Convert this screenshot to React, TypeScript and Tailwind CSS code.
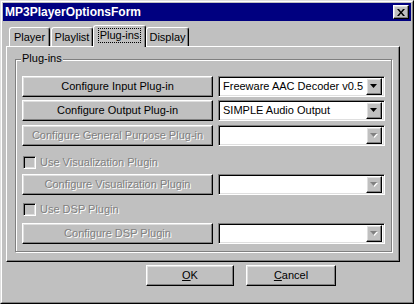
import React from 'react';

const raised =
  'border border-t-white border-l-white border-r-black border-b-black shadow-[inset_-1px_-1px_0_#808080,inset_1px_1px_0_#dfdfdf]';
const sunken =
  'border border-t-[#808080] border-l-[#808080] border-r-white border-b-white shadow-[inset_1px_1px_0_#000,inset_-1px_-1px_0_#dfdfdf]';
const dimText = 'text-[#808080] [text-shadow:1px_1px_0_#ffffff]';

function Arrow({ disabled }: { disabled?: boolean }) {
  return (
    <div className={`w-[16px] h-[17px] bg-[#c0c0c0] flex items-center justify-center ${raised}`}>
      <svg width="8" height="5" viewBox="0 0 8 5">
        {disabled && <path d="M1 1h7L4.5 5z" fill="#ffffff" />}
        <path d="M0 0h7L3.5 4z" fill={disabled ? '#808080' : '#000000'} />
      </svg>
    </div>
  );
}

function Combo({ value, disabled }: { value?: string; disabled?: boolean }) {
  return (
    <div className={`w-[167px] h-[21px] bg-white flex items-center justify-between p-[2px] ${sunken}`}>
      <span className="pl-[2px] text-[11px] text-black leading-none whitespace-nowrap">{value}</span>
      <Arrow disabled={disabled} />
    </div>
  );
}

function PushButton({ label, disabled, width = 'w-[191px]' }: { label: React.ReactNode; disabled?: boolean; width?: string }) {
  return (
    <div className={`${width} h-[21px] bg-[#c0c0c0] flex items-center justify-center text-[11px] leading-none ${raised} ${disabled ? dimText : 'text-black'}`}>
      {label}
    </div>
  );
}

function PluginRow({ label, value, disabled }: { label: string; value?: string; disabled?: boolean }) {
  return (
    <div className="flex items-center gap-[5px]">
      <PushButton label={label} disabled={disabled} />
      <Combo value={value} disabled={disabled} />
    </div>
  );
}

function Check({ label }: { label: string }) {
  return (
    <div className="flex items-center h-[13px] pl-[1px]">
      <div className={`w-[13px] h-[13px] bg-[#c0c0c0] ${sunken}`} />
      <span className={`ml-[4px] text-[11px] leading-none ${dimText}`}>{label}</span>
    </div>
  );
}

function Tab({ label, active, width, className = '' }: { label: string; active?: boolean; width: string; className?: string }) {
  return (
    <div
      className={`${width} ${className} ${
        active ? 'h-[22px] -mb-[1px] relative z-10 pb-[3px]' : 'h-[19px]'
      } bg-[#c0c0c0] rounded-t-[3px] border border-b-0 border-t-white border-l-white border-r-black shadow-[inset_-1px_0_0_#808080] flex items-center justify-center text-[11px] text-black leading-none`}
    >
      {active ? (
        <span className="outline outline-1 outline-dotted outline-black px-[1px] py-[1px]">{label}</span>
      ) : (
        label
      )}
    </div>
  );
}

export default function App() {
  return (
    <div className="w-[414px] h-[304px] bg-[#c0c0c0] font-['Liberation_Sans',Arial,sans-serif] border border-t-[#dfdfdf] border-l-[#dfdfdf] border-r-black border-b-black">
      <div className="h-full border border-t-white border-l-white border-r-[#808080] border-b-[#808080] p-[1px]">
        {/* Title bar */}
        <div className="h-[18px] bg-[#000080] flex items-center justify-between pl-[2px] pr-[2px]">
          <span className="text-white font-bold text-[12px] leading-none">MP3PlayerOptionsForm</span>
          <div className={`w-[16px] h-[14px] bg-[#c0c0c0] flex items-center justify-center ${raised}`}>
            <svg width="8" height="7" viewBox="0 0 8 7">
              <path d="M0 0h2l2 2.5L6 0h2L5 3.5 8 7H6L4 4.5 2 7H0l3-3.5z" fill="#000" />
            </svg>
          </div>
        </div>

        {/* Tabs */}
        <div className="flex items-end h-[25px] pl-[6px]">
          <Tab label="Player" width="w-[41px]" />
          <Tab label="Playlist" width="w-[42px]" className="ml-[1px]" />
          <Tab label="Plug-ins" width="w-[53px]" active />
          <Tab label="Display" width="w-[43px]" className="ml-[0px]" />
        </div>

        {/* Tab page */}
        <div className="ml-[3px] w-[394px] h-[216px] border border-t-white border-l-white border-r-black border-b-black shadow-[inset_-1px_-1px_0_#808080] pt-[12px] pl-[8px]">
          <div className="relative w-[377px] h-[193px] border border-[#808080] shadow-[inset_1px_1px_0_#ffffff,1px_1px_0_#ffffff] pt-[16px] pl-[6px]">
            <span className="absolute -top-[7px] left-[5px] px-[1px] bg-[#c0c0c0] text-[11px] leading-none text-black">Plug-ins</span>
            <div className="flex flex-col">
              <PluginRow label="Configure Input Plug-in" value="Freeware AAC Decoder v0.5" />
              <div className="mt-[3px]">
                <PluginRow label="Configure Output Plug-in" value="SIMPLE Audio Output" />
              </div>
              <div className="mt-[4px]">
                <PluginRow label="Configure General Purpose Plug-in" disabled />
              </div>
              <div className="mt-[10px]">
                <Check label="Use Visualization Plugin" />
              </div>
              <div className="mt-[5px]">
                <PluginRow label="Configure Visualization Plugin" disabled />
              </div>
              <div className="mt-[8px]">
                <Check label="Use DSP Plugin" />
              </div>
              <div className="mt-[7px]">
                <PluginRow label="Configure DSP Plugin" disabled />
              </div>
            </div>
          </div>
        </div>

        {/* Dialog buttons */}
        <div className="flex mt-[3px] ml-[143px] gap-[12px]">
          <PushButton width="w-[88px]" label={<span><span className="underline">O</span>K</span>} />
          <PushButton width="w-[90px]" label={<span><span className="underline">C</span>ancel</span>} />
        </div>
      </div>
    </div>
  );
}
